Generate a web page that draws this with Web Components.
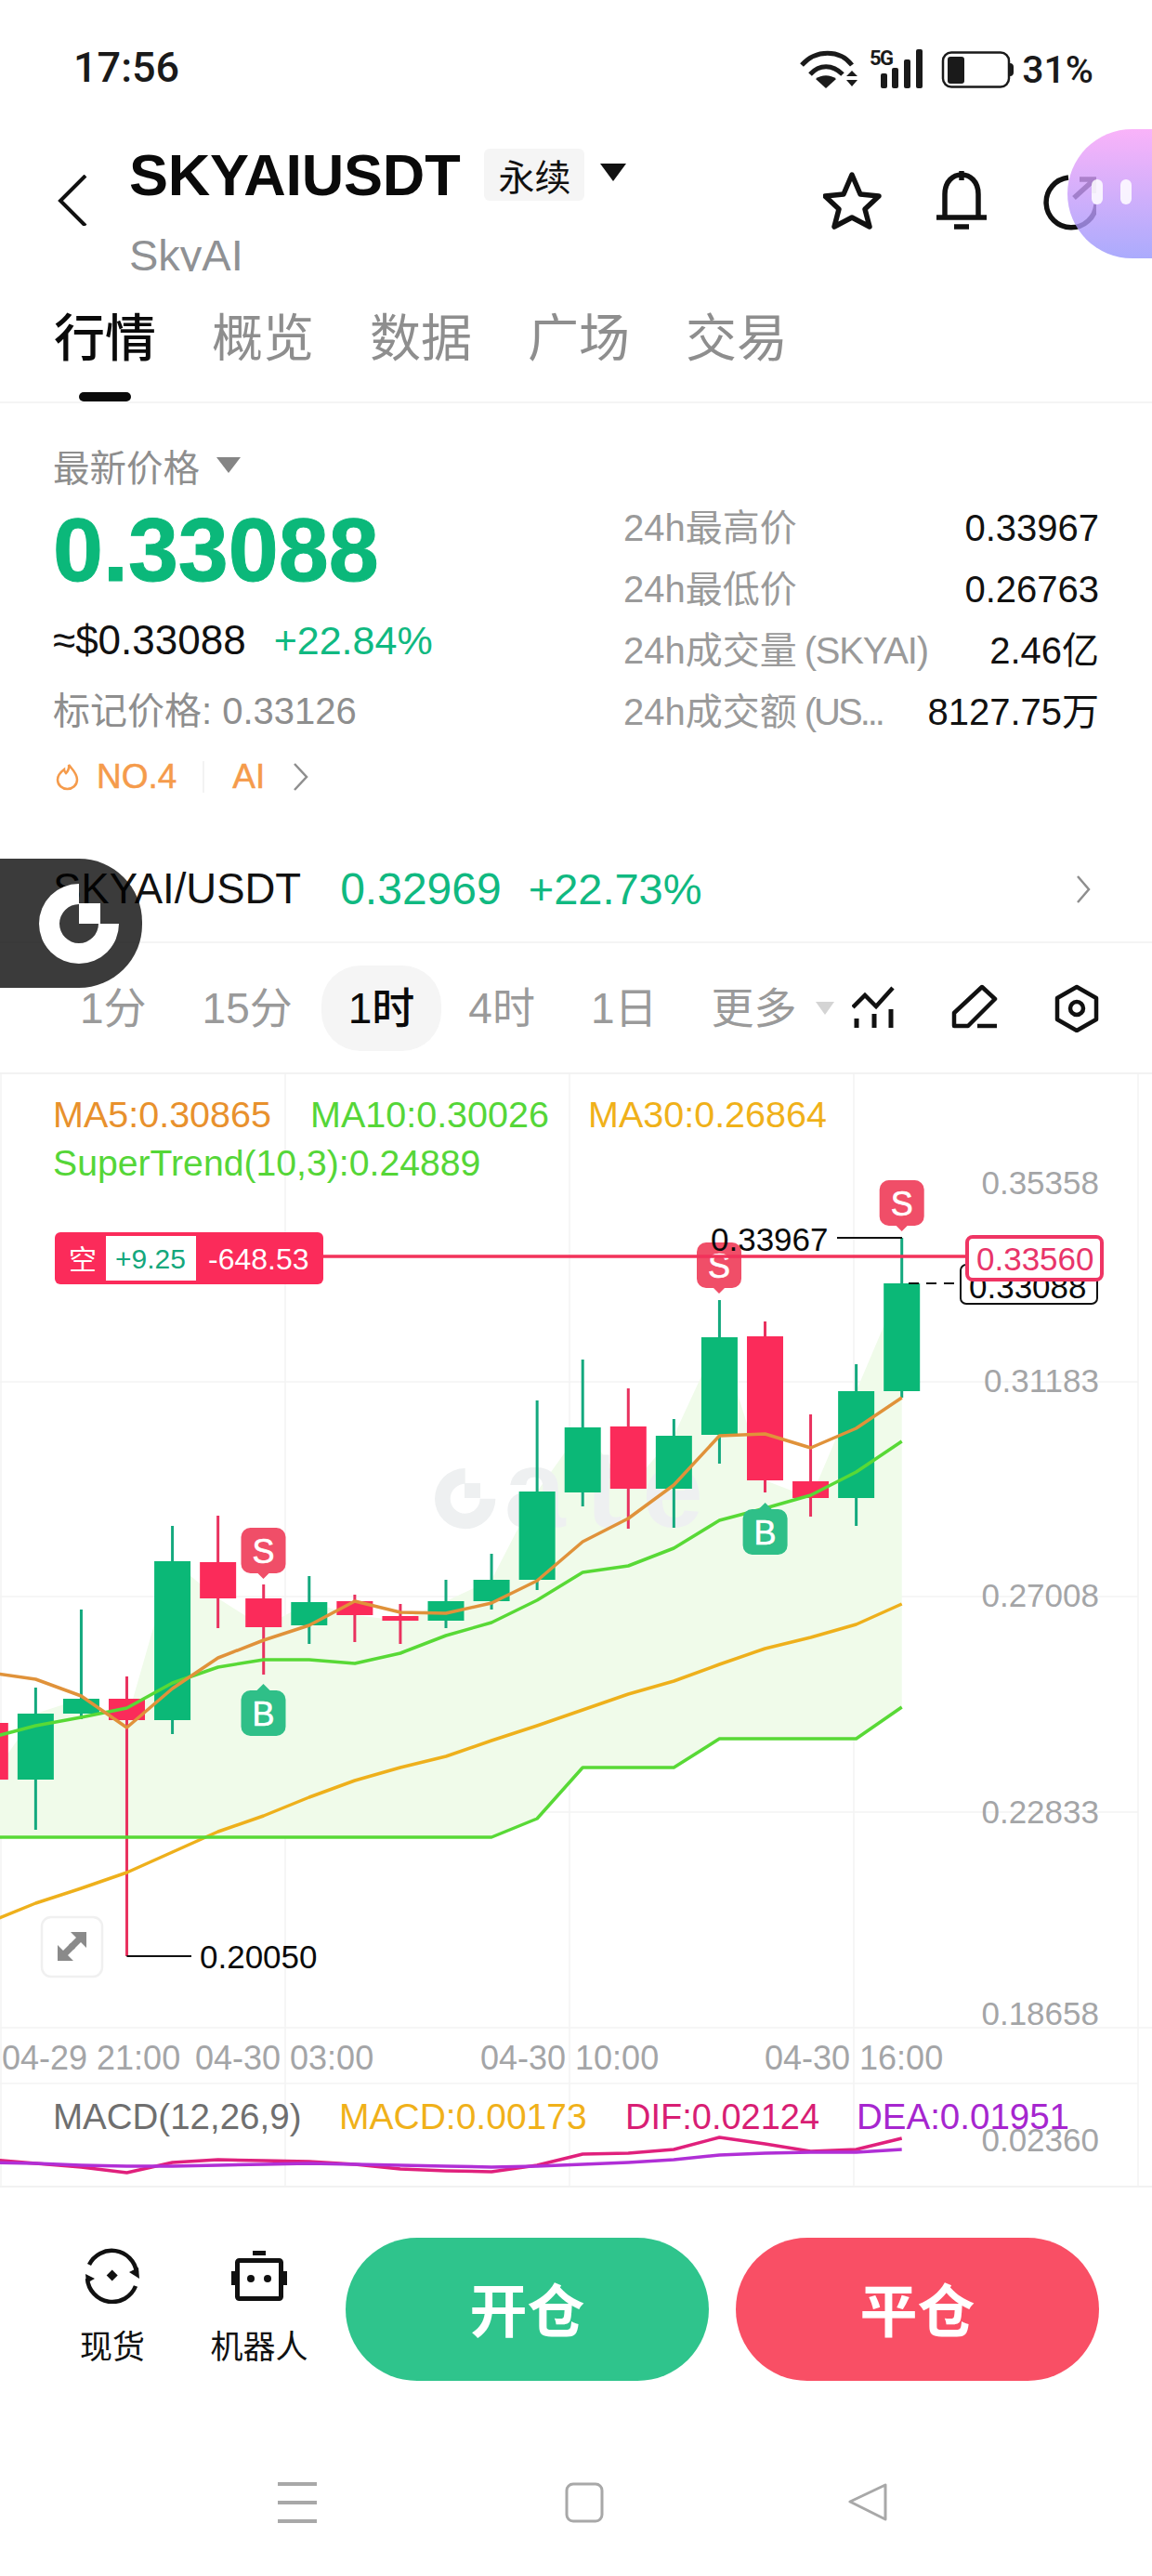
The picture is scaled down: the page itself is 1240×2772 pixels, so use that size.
<!DOCTYPE html>
<html lang="zh">
<head>
<meta charset="utf-8">
<title>SKYAIUSDT</title>
<style>
  html, body { margin: 0; padding: 0; background: #fff; }
  body {
    position: relative;
    width: 1240px;
    height: 2772px;
    overflow: hidden;
    font-family: "Liberation Sans", "Noto Sans CJK SC", sans-serif;
    color: #111;
  }
</style>
</head>
<body>
<status-bar></status-bar>
<coin-header></coin-header>
<main-tabs>
  <tab-item active>行情</tab-item>
  <tab-item>概览</tab-item>
  <tab-item>数据</tab-item>
  <tab-item>广场</tab-item>
  <tab-item>交易</tab-item>
</main-tabs>
<price-panel>
  <stat-row label="24h最高价">0.33967</stat-row>
  <stat-row label="24h最低价">0.26763</stat-row>
  <stat-row label="24h成交量" extra="(SKYAI)">2.46亿</stat-row>
  <stat-row label="24h成交额" extra="(US..." tight>8127.75万</stat-row>
</price-panel>
<spot-row></spot-row>
<period-bar></period-bar>
<kline-chart></kline-chart>
<action-bar></action-bar>
<nav-bar></nav-bar>
<float-assistant></float-assistant>
<float-logo></float-logo>

<script>
const SANS = '"Liberation Sans", "Noto Sans CJK SC", sans-serif'
const GATE_RING = 'M43 0a43 43 0 1 0 43 43H64a21 21 0 1 1-21-21z'

function shadow(el, html) {
  el.attachShadow({ mode: 'open' })
  const template = document.createElement('template')
  template.innerHTML = html
  el.shadowRoot.appendChild(template.content.cloneNode(true))
}

class StatusBar extends HTMLElement {
  connectedCallback() {
    shadow(this, `
    <style>
      :host { display: flex; align-items: flex-start; height: 139px; box-sizing: border-box; padding: 0 63px 0 79px; font-family: Roboto, sans-serif; font-weight: 500; color: #1a1a1a; }
      .time { font-size: 45px; line-height: 50px; margin-top: 48px; }
      svg { display: block; margin: 50px 8px 0 auto; }
      .pct { font-size: 41px; line-height: 48px; margin-top: 51px; }
      text { font-family: Roboto, sans-serif; font-weight: 700; font-size: 22px; }
    </style>
    <span class="time">17:56</span>
    <svg width="231" height="46" viewBox="862 50 231 46" fill="#1a1a1a">
      <g fill="none" stroke="#1a1a1a" stroke-width="5">
        <path d="M864 70c15-17 41-17 54 0"/>
        <path d="M873 80c10-11 24-11 35 0"/>
      </g>
      <path d="M879 85c6-5 16-5 22 0l-11 10z"/>
      <path d="M915 82l6-6 6 6zM915 86h12l-6 7z" transform="translate(-3 0)"/>
      <text x="937" y="70" letter-spacing="-1.5">5G</text>
      <rect x="949" y="79" width="7" height="16" rx="2"/>
      <rect x="961" y="73" width="7" height="22" rx="2"/>
      <rect x="974" y="64" width="7" height="31" rx="2"/>
      <rect x="987" y="53" width="7" height="42" rx="2"/>
      <rect x="1016" y="56.5" width="71" height="37" rx="9" fill="none" stroke="#1a1a1a" stroke-width="2.5"/>
      <rect x="1021" y="61" width="18" height="29" rx="3"/>
      <path d="M1088 68c3 0 4 2 4 4v6c0 2-1 4-4 4z"/>
    </svg>
    <span class="pct">31%</span>`)
  }
}

class CoinHeader extends HTMLElement {
  connectedCallback() {
    shadow(this, `
    <style>
      :host { display: flex; align-items: flex-start; height: 181px; padding-right: 60px; font-family: ${SANS}; }
      .back { display: block; margin: 49px 0 0 62px; flex: none; }
      .col { margin-left: 45px; }
      .line { display: flex; align-items: center; height: 60px; margin-top: 19px; }
      h1 { margin: 0; font-size: 63px; line-height: 60px; font-weight: 700; color: #0a0a0a; letter-spacing: -.2px; }
      .badge { display: flex; align-items: center; justify-content: center; margin-left: 26px; width: 108px; height: 56px; background: #f5f5f5; border-radius: 6px; font-size: 39px; color: #111; }
      .caret { display: block; margin: -6px 0 0 17px; }
      .sub { height: 40px; margin-top: 34px; overflow: hidden; font-size: 47px; line-height: 46px; color: #8f9194; }
      .tools { display: block; margin: 45px 0 0 auto; }
    </style>
    <svg class="back" width="32" height="55" viewBox="0 0 32 55" fill="none" stroke="#111" stroke-width="4"><path d="M30 1L3 28l27 27"/></svg>
    <div class="col">
      <div class="line"><h1>SKYAIUSDT</h1><span class="badge">永续</span>
        <svg class="caret" width="28" height="19" viewBox="0 0 28 19"><path d="M0 0h28L14 19z" fill="#111"/></svg></div>
      <div class="sub">SkyAI</div>
    </div>
    <svg class="tools" width="294" height="64" viewBox="886 184 294 64" fill="none" stroke="#111" stroke-width="5.5">
      <path stroke-linejoin="round" d="M917 188l9 21 20 2-15 14 5 19-19-10-19 10 5-19-15-14 20-2z"/>
      <path d="M1017 232v-23c0-28 36-28 36 0v23" />
      <path d="M1035 184v10M1008 234h54M1027 244h16"/>
      <path d="M1150 191a27 27 0 1 0 30 29"/>
      <path d="M1156 213l21-19M1162 193h16v15"/>
    </svg>`)
  }
}

class MainTabs extends HTMLElement {
  connectedCallback() {
    shadow(this, `
    <style>
      :host { display: flex; gap: 60px; height: 98px; padding: 14px 0 0 58px; border-bottom: 2px solid #f4f4f4; }
    </style>
    <slot></slot>`)
  }
}

class TabItem extends HTMLElement {
  connectedCallback() {
    shadow(this, `
    <style>
      :host { display: flex; flex-direction: column; align-items: center; font-family: ${SANS}; font-size: 55px; line-height: 60px; color: #8e8e8e; }
      :host([active]) { color: #0a0a0a; font-weight: 500; }
      .bar { display: none; width: 56px; height: 11px; margin-top: 28px; border-radius: 5px; background: #0a0a0a; }
      :host([active]) .bar { display: block; }
    </style>
    <slot></slot><span class="bar"></span>`)
  }
}

class StatRow extends HTMLElement {
  connectedCallback() {
    const extra = this.getAttribute('extra')
    shadow(this, `
    <style>
      :host { display: flex; justify-content: space-between; height: 66px; font-family: ${SANS}; font-size: 40px; line-height: 66px; color: #111; white-space: nowrap; }
      .label { color: #9a9a9a; }
      .extra { margin-left: 8px; letter-spacing: -1.2px; }
      :host([tight]) .extra { letter-spacing: -3px; }
    </style>
    <span class="label">${this.getAttribute('label')}${extra ? `<span class="extra">${extra}</span>` : ''}</span><span><slot></slot></span>`)
  }
}

class PricePanel extends HTMLElement {
  connectedCallback() {
    shadow(this, `
    <style>
      :host { display: flex; height: 466px; padding: 0 57px; font-family: ${SANS}; }
      .left { width: 614px; flex: none; }
      .right { flex: 1; margin-top: 101px; }
      .head { display: flex; align-items: center; gap: 18px; height: 50px; margin-top: 41px; font-size: 39.5px; color: #8e8e8e; }
      .big { height: 90px; margin-top: 22px; font-size: 97px; line-height: 90px; font-weight: 700; color: #0bb87a; -webkit-text-stroke: 1px #0bb87a; }
      .usd { display: flex; gap: 30px; height: 50px; margin-top: 27px; font-size: 44px; line-height: 50px; color: #111; }
      .usd b { font-weight: 400; font-size: 43px; color: #10b981; }
      .mark { height: 50px; margin-top: 26px; font-size: 40px; line-height: 50px; color: #8e8e8e; }
      .tags { display: flex; align-items: center; height: 50px; margin-top: 21px; font-size: 37px; color: #f59b4b; -webkit-text-stroke: .5px #f59b4b; }
      .tags i { width: 2px; height: 34px; margin: 0 30px 0 28px; background: #f3f3f3; }
      .flame { margin: 0 19px 0 3px; }
      .more { margin-left: 30px; }
    </style>
    <div class="left">
      <div class="head">最新价格<svg width="26" height="17" viewBox="0 0 26 17"><path d="M0 0h26L13 17z" fill="#858585"/></svg></div>
      <div class="big">0.33088</div>
      <div class="usd"><span>≈$0.33088</span><b>+22.84%</b></div>
      <div class="mark">标记价格: 0.33126</div>
      <div class="tags">
        <svg class="flame" width="25" height="30" viewBox="0 0 25 30" fill="none" stroke="#f59b4b" stroke-width="2.5"><path d="M14 2c1 5-1 7-3 9-1-1-2-2-2-4C5 10 2 14 2 18c0 6 5 10 10.5 10S23 24 23 18c0-7-6-12-9-16z"/></svg>
        <span>NO.4</span><i></i><span>AI</span>
        <svg class="more" width="18" height="32" viewBox="0 0 18 32" fill="none" stroke="#8e8e8e" stroke-width="2.5"><path d="M2 2l13 14L2 30"/></svg>
      </div>
    </div>
    <div class="right"><slot></slot></div>`)
  }
}

class SpotRow extends HTMLElement {
  connectedCallback() {
    shadow(this, `
    <style>
      :host { display: flex; align-items: center; height: 113px; padding: 0 65px 0 57px; border-bottom: 2px solid #f4f4f4; font-family: ${SANS}; font-size: 45.5px; color: #111; white-space: nowrap; }
      .num { margin-left: 42px; color: #10b981; font-size: 48px; }
      .pct { margin-left: 29px; color: #10b981; font-size: 47px; }
      svg { margin-left: auto; }
    </style>
    <span>SKYAI/USDT</span><span class="num">0.32969</span><span class="pct">+22.73%</span>
    <svg width="17" height="32" viewBox="0 0 17 32" fill="none" stroke="#8e8e8e" stroke-width="2.5"><path d="M2 2l12 14L2 30"/></svg>`)
  }
}

class PeriodBar extends HTMLElement {
  connectedCallback() {
    shadow(this, `
    <style>
      :host { display: flex; align-items: center; height: 139px; padding: 0 57px 0 57px; font-family: ${SANS}; font-size: 46px; color: #9a9a9a; white-space: nowrap; }
      span { padding: 0 29px; line-height: 92px; }
      span:nth-of-type(2), span:nth-of-type(3), span:nth-of-type(5) { margin-left: 2px; }
      .on { background: #f5f5f5; border-radius: 42px; color: #0a0a0a; font-weight: 500; }
      .caret { display: block; margin-left: -9px; }
      .tools { display: block; margin-left: auto; }
    </style>
    <span>1分</span><span>15分</span><span class="on">1时</span><span>4时</span><span>1日</span><span>更多</span>
    <svg class="caret" width="20" height="14" viewBox="0 0 20 14"><path d="M0 0h20L10 14z" fill="#d4d4d4"/></svg>
    <svg class="tools" width="266" height="52" viewBox="918 1059 266 52" fill="none" stroke="#111" stroke-width="4.5">
      <path d="M919 1084l13-13 12 12 18-20"/>
      <path stroke-width="5" d="M923 1096v10M942 1091v15M960 1086v20"/>
      <path stroke-linejoin="round" d="M1028 1104v-14l30-28 14 13-29 29z"/>
      <path d="M1053 1104h21"/>
      <path stroke-linejoin="round" d="M1160 1062l21 12v23l-21 12-21-12v-23z"/>
      <circle cx="1160" cy="1085" r="7"/>
    </svg>`)
  }
}

// 蜡烛数据: [颜色, 上影, 实体上, 实体下, 下影]
const CANDLES = [
  ['r', 1854, 1854, 1915, 1915], ['g', 1816, 1844, 1915, 1969], ['g', 1732, 1828, 1844, 1850],
  ['r', 1804, 1828, 1851, 2105], ['g', 1642, 1680, 1851, 1866], ['r', 1631, 1681, 1720, 1752],
  ['r', 1705, 1720, 1751, 1802], ['g', 1696, 1724, 1749, 1769], ['r', 1716, 1723, 1738, 1767],
  ['r', 1726, 1739, 1744, 1769], ['g', 1700, 1723, 1744, 1752], ['g', 1672, 1700, 1723, 1732],
  ['g', 1507, 1605, 1700, 1711], ['g', 1463, 1536, 1606, 1621], ['r', 1494, 1535, 1602, 1645],
  ['g', 1527, 1545, 1602, 1644], ['g', 1399, 1439, 1544, 1575], ['r', 1422, 1438, 1593, 1606],
  ['r', 1522, 1594, 1612, 1632], ['g', 1468, 1497, 1612, 1642], ['g', 1332, 1381, 1497, 1504],
]
const CX = (i) => -10.7 + i * 49.07
const series = (ys) => ys.map((y, i) => `${CX(i).toFixed(1)},${y}`).join(' ')

const MA5 = [1800, 1807, 1825, 1859, 1817, 1784, 1765, 1749, 1723, 1735, 1736, 1725, 1701, 1659, 1634, 1598, 1545, 1543, 1558, 1537, 1504]
const MA10 = [1870, 1857, 1848, 1838, 1811, 1794, 1786, 1786, 1790, 1779, 1760, 1746, 1722, 1692, 1685, 1666, 1636, 1623, 1609, 1584, 1551]
const MA30 = [2068, 2048, 2032, 2015, 1993, 1971, 1954, 1934, 1916, 1902, 1890, 1873, 1857, 1840, 1823, 1809, 1791, 1774, 1762, 1748, 1726]
const TREND = [1977, 1977, 1977, 1977, 1977, 1977, 1977, 1977, 1977, 1977, 1977, 1977, 1957, 1902, 1902, 1902, 1871, 1871, 1871, 1871, 1837]
const DIF = [2324, 2328, 2332, 2338, 2327, 2324, 2325, 2326, 2329, 2334, 2336, 2337, 2330, 2318, 2317, 2313, 2300, 2307, 2315, 2313, 2301]
const DEA = [2327, 2328, 2330, 2331, 2331, 2330, 2329, 2328, 2329, 2330, 2331, 2332, 2331, 2329, 2327, 2324, 2319, 2317, 2316, 2316, 2313]

class KlineChart extends HTMLElement {
  connectedCallback() {
    const closes = CANDLES.map((c) => (c[0] === 'g' ? c[2] : c[3]))
    const band = series(closes) + ' ' + TREND.map((y, i) => `${CX(i).toFixed(1)},${y}`).reverse().join(' ')
    const candles = CANDLES.map((c, i) => {
      const x = CX(i)
      const fill = c[0] === 'g' ? '#0bb877' : '#fb2b5a'
      const wick = c[0] === 'g' ? '#14a97e' : '#e9325f'
      return `<rect x="${x - 1.5}" y="${c[1]}" width="3" height="${c[4] - c[1]}" fill="${wick}"/>
        <rect x="${x - 19.5}" y="${c[2]}" width="39" height="${c[3] - c[2]}" fill="${fill}"/>`
    }).join('')
    const yLabels = [['0.35358', 1272], ['0.31183', 1485], ['0.27008', 1716], ['0.22833', 1949], ['0.18658', 2166], ['0.02360', 2302]]
      .map(([t, y]) => `<text x="1183" y="${y}" dy=".36em" text-anchor="end" font-size="35" fill="#a4a5a7">${t}</text>`).join('')
    const xLabels = [['04-29 21:00', 2], ['04-30 03:00', 210], ['04-30 10:00', 517], ['04-30 16:00', 823]]
      .map(([t, x]) => `<text x="${x}" y="2214" dy=".36em" font-size="36" fill="#a4a5a7">${t}</text>`).join('')
    const marker = (kind, x, y) => {
      const color = kind === 'S' ? '#f04e68' : '#2fbf88'
      const tip = kind === 'S' ? `M${x - 7} ${y + 48}l7 7 7-7z` : `M${x - 7} ${y}l7-7 7 7z`
      return `<path d="${tip}" fill="${color}"/><rect x="${x - 24}" y="${y}" width="48" height="49" rx="10" fill="${color}"/>
        <text x="${x}" y="${y + 25}" dy=".36em" text-anchor="middle" font-size="36" fill="#fff" stroke="#fff" stroke-width=".6">${kind}</text>`
    }
    shadow(this, `
    <style>
      :host { display: block; height: 1198px; border-top: 2px solid #f2f2f2; box-sizing: border-box; }
      svg { display: block; }
      text { font-family: ${SANS}; }
      .line { fill: none; stroke-width: 3.5; stroke-linejoin: round; }
    </style>
    <svg width="1240" height="1196" viewBox="0 1156 1240 1196">
      <g stroke="#f3f4f4" stroke-width="1.5" fill="none">
        <path d="M1 1156V2352M307 1156V2352M613 1156V2352M919 1156V2352M1225 1156V2352"/>
        <path d="M0 1487H1225M0 1718H1225M0 1950H1225M0 2182H1240M0 2242H1225"/>
      </g>
      <polygon points="${band}" fill="#f0fbea"/>
      <g fill="#eef0f1">
        <path d="${GATE_RING}" transform="translate(468 1580) scale(.76)"/>
        <rect x="500" y="1596" width="17" height="16"/>
        <text x="543" y="1643" font-size="118" font-weight="700" textLength="214" lengthAdjust="spacing">ate</text>
      </g>
      ${candles}
      <polyline class="line" points="${series(MA30)}" stroke="#eeb01c"/>
      <polyline class="line" points="${series(TREND)}" stroke="#58d936"/>
      <polyline class="line" points="${series(MA10)}" stroke="#58d936"/>
      <polyline class="line" points="${series(MA5)}" stroke="#e0923a"/>
      <polyline class="line" points="${series(DIF)}" stroke="#e0207c"/>
      <polyline class="line" points="${series(DEA)}" stroke="#b02fd6"/>

      ${marker('S', 283.5, 1644)}
      ${marker('B', 283.5, 1819)}
      ${marker('B', 823.6, 1624)}
      ${marker('S', 774, 1337)}
      ${marker('S', 970.7, 1270)}

      <text font-size="39.5" y="1199" dy=".36em" fill="#e8912d" x="57">MA5:0.30865</text>
      <text font-size="39.5" y="1199" dy=".36em" fill="#55d638" x="334">MA10:0.30026</text>
      <text font-size="39.5" y="1199" dy=".36em" fill="#f0b11a" x="633">MA30:0.26864</text>
      <text font-size="39.2" y="1251" dy=".36em" fill="#55d638" x="57">SuperTrend(10,3):0.24889</text>

      <path d="M348 1352H1040" stroke="#f2325a" stroke-width="3.5"/>
      <rect x="59" y="1326" width="289" height="56" rx="6" fill="#fb2b5a"/>
      <text x="74" y="1355" dy=".36em" font-size="30" fill="#fff">空</text>
      <rect x="114" y="1330" width="97" height="48" fill="#fff"/>
      <text x="162" y="1354" dy=".36em" text-anchor="middle" font-size="30" fill="#14a77c">+9.25</text>
      <text x="224" y="1354" dy=".36em" font-size="32" fill="#fff">-648.53</text>

      <text x="765" y="1333" dy=".36em" font-size="35" fill="#0a0a0a">0.33967</text>
      <path d="M901 1332H971" stroke="#111" stroke-width="2"/>
      <path d="M978 1381H1031" stroke="#111" stroke-width="2" stroke-dasharray="11 8"/>
      <rect x="1034" y="1361" width="147" height="42" rx="6" fill="#fff" stroke="#111" stroke-width="2"/>
      <text x="1043" y="1384" dy=".36em" font-size="35" fill="#0a0a0a">0.33088</text>
      <rect x="1041" y="1331" width="145" height="46" rx="6" fill="#fff" stroke="#ef3564" stroke-width="4"/>
      <text x="1051" y="1354" dy=".36em" font-size="35" fill="#e8356a">0.33560</text>

      <path d="M136.4 2105H206" stroke="#111" stroke-width="2"/>
      <text x="215" y="2105" dy=".36em" font-size="35" fill="#0a0a0a">0.20050</text>

      <rect x="45" y="2063" width="65" height="64" rx="10" fill="#fff" stroke="#f0f0f0" stroke-width="2.5"/>
      <g fill="#8a8a8a"><path d="M93 2079v17l-6-6-8 8-5-5 8-8-6-6z"/><path d="M62 2110v-17l6 6 8-8 5 5-8 8 6 6z"/></g>

      ${yLabels}
      ${xLabels}
      <text font-size="38.5" y="2277" dy=".36em" fill="#6f6f6f" x="57">MACD(12,26,9)</text>
      <text font-size="39" y="2277" dy=".36em" fill="#f0b11a" x="365">MACD:0.00173</text>
      <text font-size="38" y="2277" dy=".36em" fill="#d81e74" x="673">DIF:0.02124</text>
      <text font-size="38.5" y="2277" dy=".36em" fill="#a626cf" x="922">DEA:0.01951</text>
    </svg>`)
  }
}

class ActionBar extends HTMLElement {
  connectedCallback() {
    shadow(this, `
    <style>
      :host { display: flex; align-items: flex-start; box-sizing: border-box; height: 288px; padding: 54px 0 0 63px; border-top: 2px solid #f2f2f2; font-family: ${SANS}; }
      .item { display: flex; flex-direction: column; align-items: center; width: 116px; margin-top: 11px; font-size: 35px; line-height: 40px; color: #111; white-space: nowrap; }
      .item + .item { margin-left: 42px; }
      .item svg { display: block; margin-bottom: 27px; }
      .btn { display: flex; align-items: center; justify-content: center; box-sizing: border-box; width: 391px; height: 154px; padding-bottom: 4px; border-radius: 77px; font-size: 62px; font-weight: 700; color: #fff; }
      .open { margin-left: 35px; background: #2fc48c; }
      .close { margin-left: 29px; background: #f94f65; }
    </style>
    <div class="item">
      <svg width="60" height="60" viewBox="91 2419 60 60" fill="none" stroke="#111" stroke-width="4.5">
        <path d="M96 2437a27 27 0 0 1 51 8"/>
        <path d="M146 2460a27 27 0 0 1-52-8"/>
        <g fill="#111" stroke="none">
          <path d="M139 2445l11 7-1-12z"/>
          <path d="M92 2447l10 5-9 5z"/>
          <path d="M120.7 2442.5l6 6-6 6-6-6z"/>
        </g>
      </svg>现货</div>
    <div class="item">
      <svg width="60" height="60" viewBox="249 2419 60 60" fill="none" stroke="#111" stroke-width="5">
        <rect x="255.5" y="2432.5" width="47" height="41" rx="2"/>
        <g fill="#111" stroke="none">
          <rect x="272" y="2422" width="14" height="5"/>
          <rect x="249" y="2444" width="4" height="15"/>
          <rect x="305" y="2444" width="4" height="15"/>
          <circle cx="270" cy="2452" r="4"/>
          <circle cx="288" cy="2452" r="4"/>
        </g>
      </svg>机器人</div>
    <div class="btn open">开仓</div>
    <div class="btn close">平仓</div>`)
  }
}

class NavBar extends HTMLElement {
  connectedCallback() {
    shadow(this, `
    <style>
      :host { display: flex; align-items: flex-start; box-sizing: border-box; height: 132px; padding: 31px 0 0 299px; }
      svg { display: block; }
    </style>
    <svg width="42" height="44" viewBox="0 0 42 44" fill="#a8a8a8"><rect width="42" height="4"/><rect y="20" width="42" height="4"/><rect y="40" width="42" height="4"/></svg>
    <svg style="margin-left:267px" width="42" height="44" viewBox="0 0 42 44" fill="none" stroke="#a8a8a8" stroke-width="3"><rect x="2" y="2" width="38" height="40" rx="7"/></svg>
    <svg style="margin-left:263px" width="42" height="44" viewBox="0 0 42 44" fill="none" stroke="#a8a8a8" stroke-width="3" stroke-linejoin="round"><path d="M40 3v37L2 21z"/></svg>`)
  }
}

class FloatAssistant extends HTMLElement {
  connectedCallback() {
    shadow(this, `
    <style>
      :host { position: absolute; top: 139px; left: 1149px; width: 91px; height: 139px; border-radius: 70px 0 0 70px; background: linear-gradient(180deg, rgba(248, 160, 248, .8), rgba(150, 150, 252, .8)); }
      i { position: absolute; top: 54px; width: 12px; height: 27px; border-radius: 6px; background: rgba(255, 255, 255, .85); }
    </style>
    <i style="left:26px"></i><i style="left:57px"></i>`)
  }
}

class FloatLogo extends HTMLElement {
  connectedCallback() {
    shadow(this, `
    <style>
      :host { position: absolute; top: 924px; left: 0; width: 153px; height: 139px; border-radius: 0 68px 68px 0; background: rgba(0, 0, 0, .77); }
      svg { position: absolute; left: 42px; top: 27px; }
    </style>
    <svg width="86" height="86" viewBox="0 0 86 86" fill="#fff">
      <path d="${GATE_RING}"/>
      <rect x="43" y="21" width="23" height="22"/>
    </svg>`)
  }
}

customElements.define('status-bar', StatusBar)
customElements.define('coin-header', CoinHeader)
customElements.define('main-tabs', MainTabs)
customElements.define('tab-item', TabItem)
customElements.define('stat-row', StatRow)
customElements.define('price-panel', PricePanel)
customElements.define('spot-row', SpotRow)
customElements.define('period-bar', PeriodBar)
customElements.define('kline-chart', KlineChart)
customElements.define('action-bar', ActionBar)
customElements.define('nav-bar', NavBar)
customElements.define('float-assistant', FloatAssistant)
customElements.define('float-logo', FloatLogo)
</script>
</body>
</html>
